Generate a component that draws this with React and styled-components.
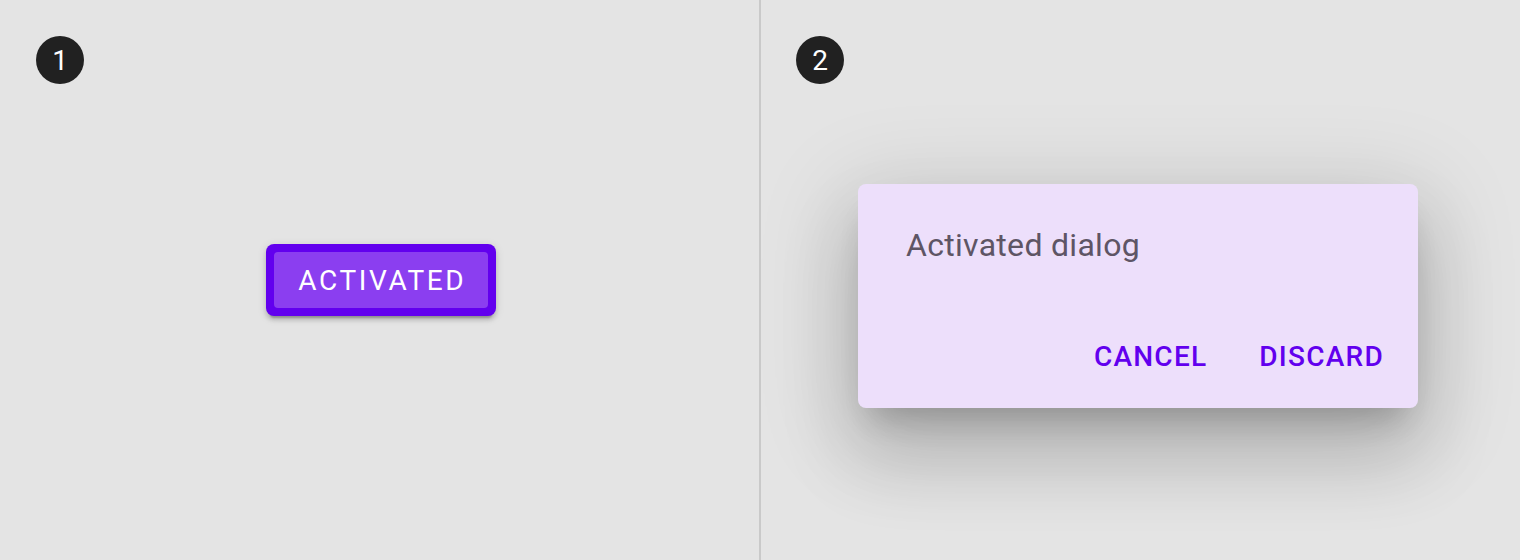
import React from "react";
import styled, { createGlobalStyle } from "styled-components";

const Global = createGlobalStyle`
  html, body { margin: 0; padding: 0; }
  body { font-family: Roboto, "Liberation Sans", sans-serif; background: #e4e4e4; }
`;

const Stage = styled.div`
  display: grid;
  grid-template-columns: 759px 2px 759px;
  width: 1520px;
  height: 560px;
  background: #e4e4e4;
  overflow: hidden;
`;

const Panel = styled.section`
  position: relative;
  display: flex;
  align-items: center;
  justify-content: center;
  padding: ${(p) => p.$pad || "0"};
  box-sizing: border-box;
`;

const Divider = styled.div`
  background: #c9c9c9;
`;

const Badge = styled.div`
  position: absolute;
  top: 36px;
  left: ${(p) => p.$left}px;
  width: 48px;
  height: 48px;
  border-radius: 50%;
  background: #212121;
  color: #fff;
  display: flex;
  align-items: center;
  justify-content: center;
  font-size: 28px;
  font-weight: 400;
`;

const ActiveButton = styled.div`
  padding: 8px;
  border-radius: 8px;
  background: #6200ee;
  box-shadow: 0 6px 2px -4px rgba(0, 0, 0, 0.2), 0 4px 4px 0 rgba(0, 0, 0, 0.14),
    0 2px 10px 0 rgba(0, 0, 0, 0.12);
`;

const ButtonFace = styled.div`
  width: 214px;
  height: 56px;
  box-sizing: border-box;
  padding-left: 2.6px;
  border-radius: 4px;
  background: #8b3ef0;
  color: #fff;
  display: flex;
  align-items: center;
  justify-content: center;
  font-size: 28px;
  font-weight: 400;
  letter-spacing: 2.6px;
`;

const Dialog = styled.div`
  width: 560px;
  height: 224px;
  box-sizing: border-box;
  border-radius: 8px;
  background: #eddffb;
  display: flex;
  flex-direction: column;
  justify-content: space-between;
  box-shadow: 0 22px 30px -14px rgba(0, 0, 0, 0.2), 0 48px 76px 6px rgba(0, 0, 0, 0.14),
    0 18px 92px 16px rgba(0, 0, 0, 0.12);
`;

const DialogText = styled.p`
  margin: 0;
  padding: 37px 48px 0;
  font-size: 32px;
  line-height: 48px;
  letter-spacing: 0.3px;
  color: #5e5565;
`;

const Actions = styled.div`
  display: flex;
  justify-content: flex-end;
  gap: 20px;
  padding: 16px 18px 16px 16px;
`;

const TextButton = styled.button`
  height: 72px;
  padding: 0 16px;
  border: none;
  background: transparent;
  color: #6200ee;
  font-family: Roboto, "Liberation Sans", sans-serif;
  font-size: 28px;
  font-weight: 500;
  letter-spacing: 1.25px;
  cursor: pointer;
`;

export default function App() {
  return (
    <>
      <Global />
      <Stage>
        <Panel $pad="0 0 0 3px">
          <Badge $left={36}>1</Badge>
          <ActiveButton>
            <ButtonFace>ACTIVATED</ButtonFace>
          </ActiveButton>
        </Panel>
        <Divider />
        <Panel $pad="32px 5px 0 0">
          <Badge $left={35}>2</Badge>
          <Dialog>
            <DialogText>Activated dialog</DialogText>
            <Actions>
              <TextButton>CANCEL</TextButton>
              <TextButton>DISCARD</TextButton>
            </Actions>
          </Dialog>
        </Panel>
      </Stage>
    </>
  );
}
